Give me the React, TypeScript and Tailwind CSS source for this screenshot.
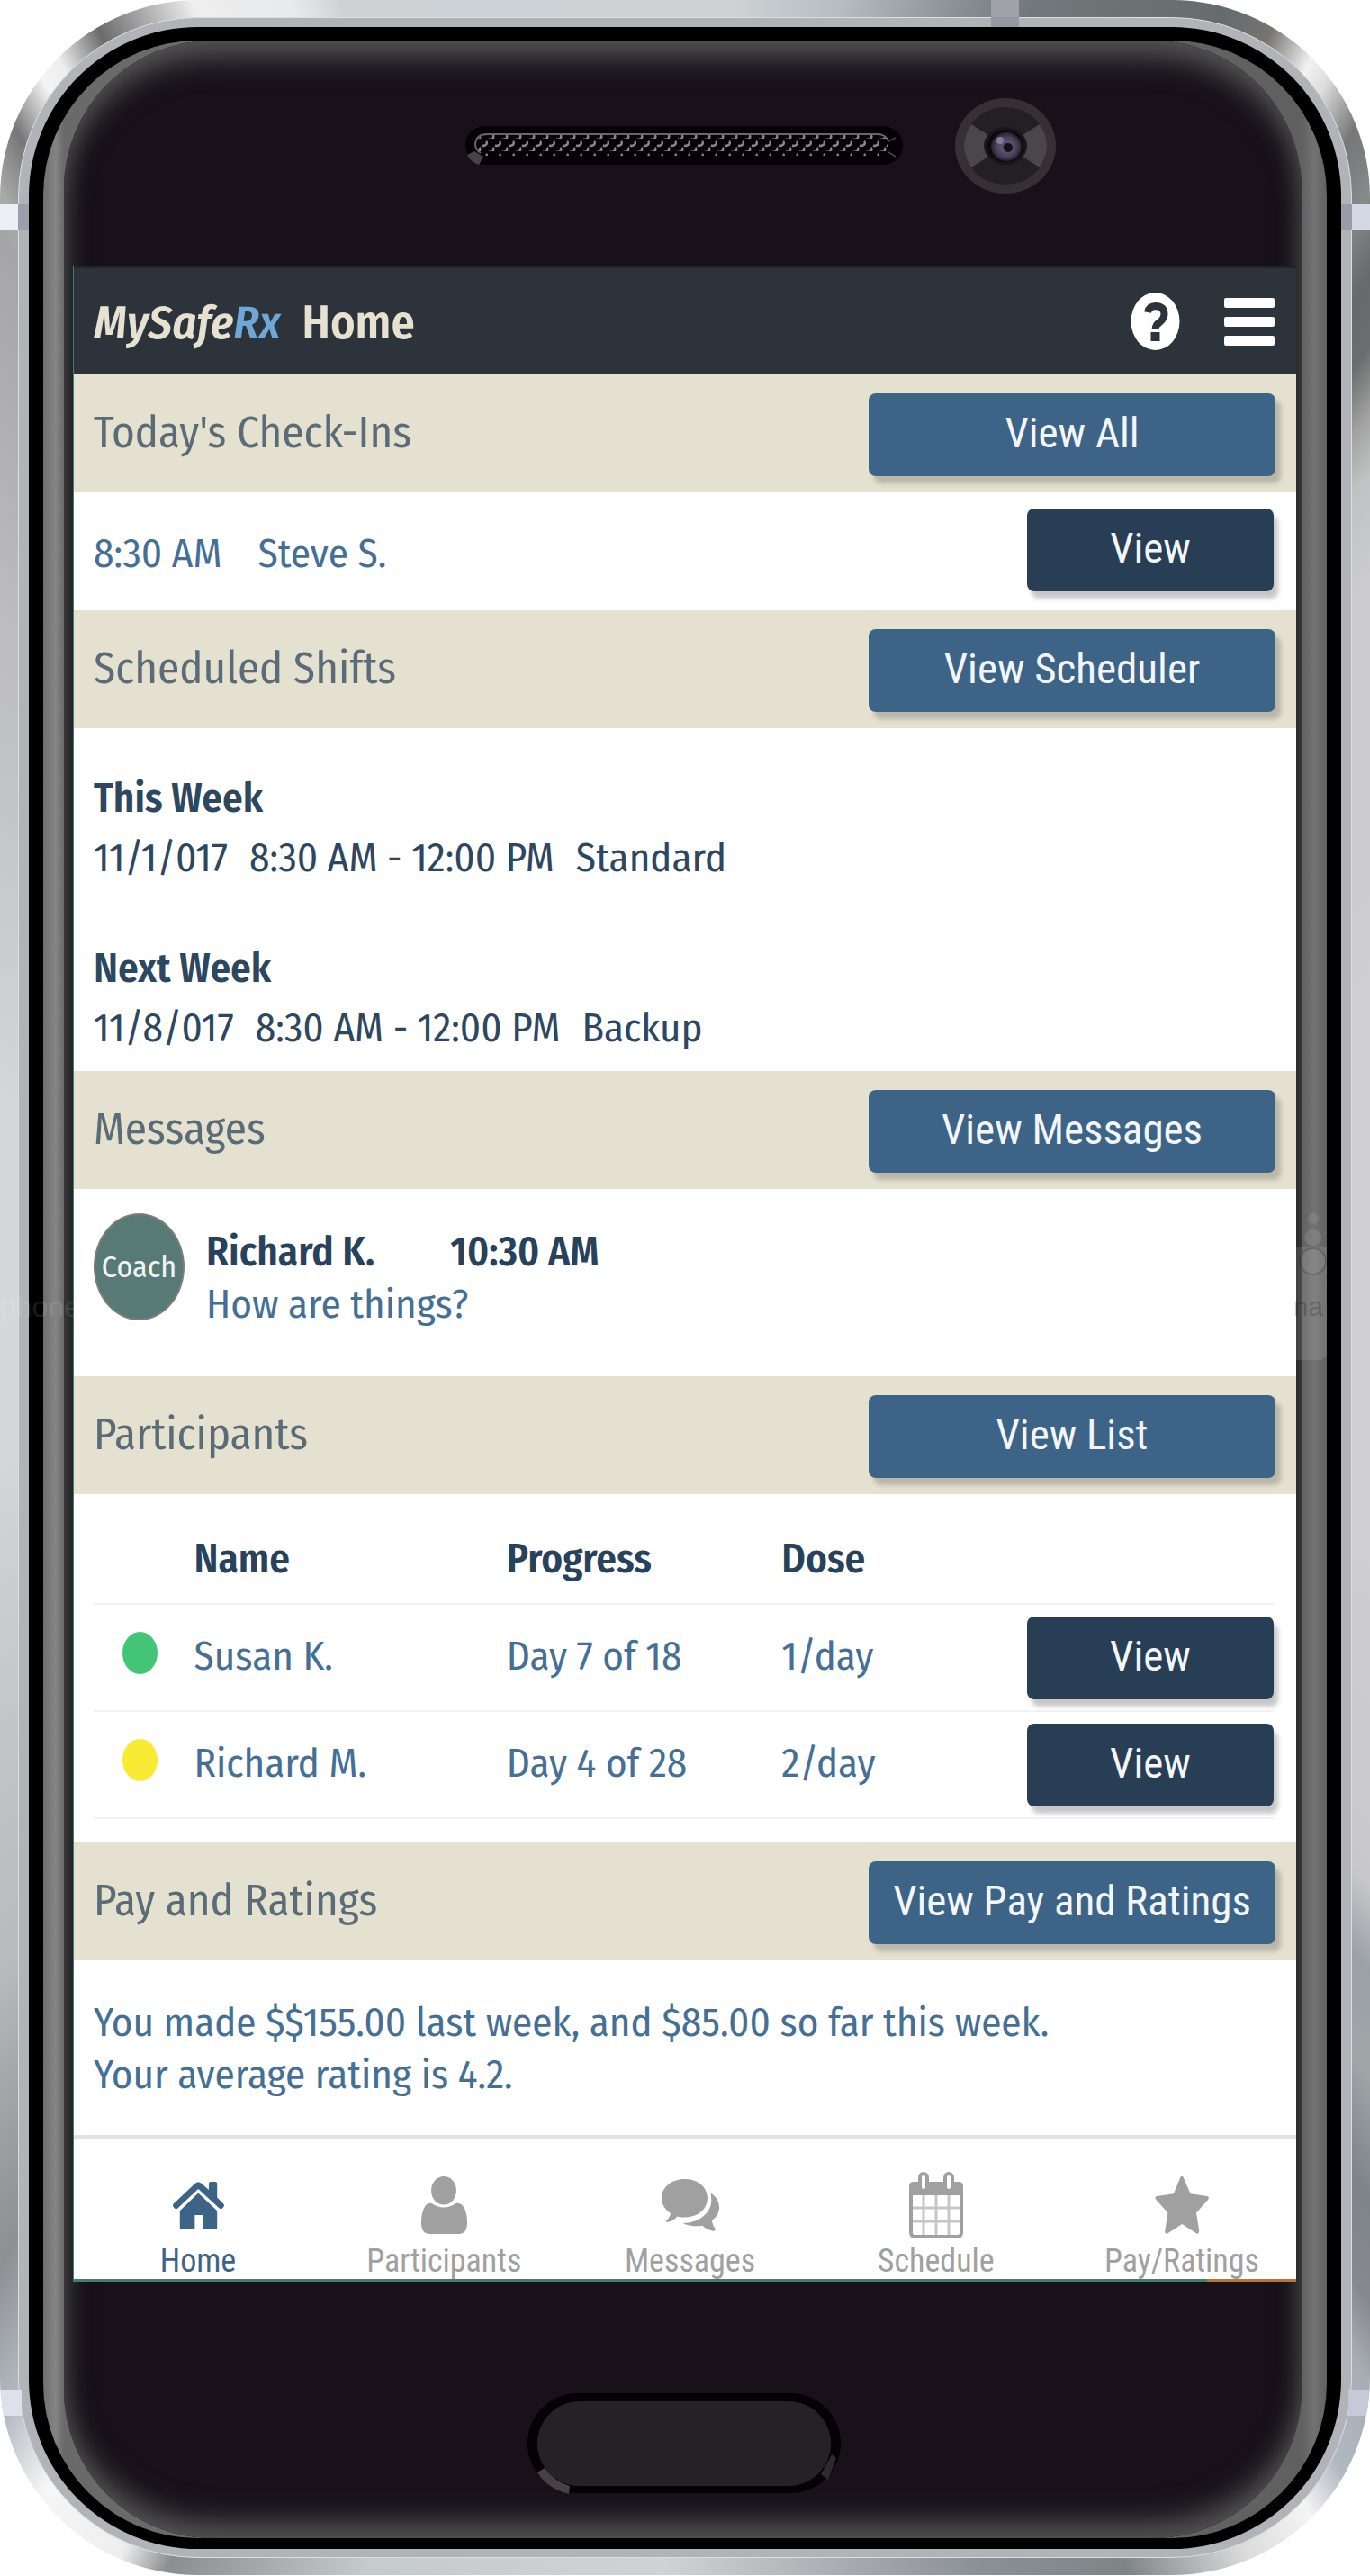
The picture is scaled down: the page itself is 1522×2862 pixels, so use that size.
import type { ReactNode } from 'react';

const sections = {
  shifts: [
    { title: 'This Week', date: '11/1/017', time: '8:30 AM - 12:00 PM', kind: 'Standard' },
    { title: 'Next Week', date: '11/8/017', time: '8:30 AM - 12:00 PM', kind: 'Backup' },
  ],
  participants: [
    { name: 'Susan K.', progress: 'Day 7 of 18', dose: '1/day', dot: 'bg-[#42c577]', status: 'On track' },
    { name: 'Richard M.', progress: 'Day 4 of 28', dose: '2/day', dot: 'bg-[#f9ea33]', status: 'Needs attention' },
  ],
};

function SectionBar({ title, action }: { title: string; action: string }) {
  return (
    <div className="flex h-[131px] items-center justify-between bg-[#e4e1d0] pt-[3px] pr-[23px] pl-[22px]">
      <h2 className="pb-1 text-[49px] leading-[60px] text-[#5c6c77]">{title}</h2>
      <button
        type="button"
        className="h-[92px] w-[452px] rounded-lg bg-[#3d6487] pb-1 font-['Roboto_Condensed','Roboto',sans-serif] text-[47px] leading-[60px] text-[#f3f6f9] shadow-[6px_8px_5px_rgba(90,85,75,0.3)]"
      >
        {action}
      </button>
    </div>
  );
}

function ViewButton({ label }: { label: string }) {
  return (
    <button
      type="button"
      aria-label={label}
      className="block h-[92px] w-[274px] rounded-lg bg-[#283e54] pb-1 font-['Roboto_Condensed','Roboto',sans-serif] text-[47px] leading-[60px] text-[#f3f6f9] shadow-[5px_8px_5px_rgba(70,70,80,0.3)]"
    >
      View
    </button>
  );
}

function HomeIcon() {
  return (
    <svg className="h-[53px] w-[57px]" viewBox="275 1035 117 158" preserveAspectRatio="none" fill="currentColor">
      <path d="M326 1040 Q333 1031 340 1040 L357 1062 V1040 Q357 1035 361 1035 H372 Q376 1035 376 1040 V1087 L390 1107 Q394 1113 390 1120 Q386 1129 381 1123 L333 1059 L286 1123 Q281 1129 277 1120 Q273 1113 277 1107 Z" />
      <path d="M333 1072 L376 1131 V1186 Q376 1193 370 1193 H343 V1145 H325 V1193 H297 Q291 1193 291 1186 V1131 Z" />
    </svg>
  );
}

function PersonIcon() {
  return (
    <svg className="h-[64px] w-[51px]" viewBox="837 1018 106 191" preserveAspectRatio="none" fill="currentColor">
      <ellipse cx="889" cy="1065" rx="29" ry="47" />
      <path d="M860 1107 Q889 1135 918 1107 Q930 1104 937 1125 Q943 1145 943 1172 Q943 1209 924 1209 H856 Q837 1209 837 1172 Q837 1145 843 1125 Q849 1104 860 1107 Z" />
    </svg>
  );
}

function ChatIcon() {
  return (
    <svg className="h-[58px] w-[64px]" viewBox="1384 1034 132 175" preserveAspectRatio="none" fill="currentColor">
      <path d="M1437 1034 C1468 1034 1489 1062 1489 1098 C1489 1134 1468 1162 1437 1162 C1431 1162 1425 1161 1420 1159 Q1410 1176 1396 1179 Q1393 1177 1396 1172 Q1405 1160 1404 1148 C1392 1136 1384 1118 1384 1098 C1384 1062 1406 1034 1437 1034 Z" />
      <path d="M1497 1081 C1510 1094 1516 1110 1516 1130 C1516 1148 1510 1162 1499 1173 Q1500 1187 1507 1200 Q1508 1209 1502 1208 Q1487 1204 1478 1190 C1460 1194 1445 1191 1433 1182 C1472 1180 1498 1145 1498 1107 Z" />
    </svg>
  );
}

function CalendarIcon() {
  return (
    <svg className="h-[74px] w-[60px]" viewBox="0 0 60 74" preserveAspectRatio="none">
      <rect x="2" y="13" width="56" height="59" rx="4" fill="#ffffff" stroke="currentColor" strokeWidth="4" />
      <path d="M0 16 Q0 11 5 11 H55 Q60 11 60 16 V26 H0 Z" fill="currentColor" />
      <g stroke="currentColor" strokeOpacity="0.6" strokeWidth="3">
        <path d="M16 26 V70 M30 26 V70 M44 26 V70 M4 40 H56 M4 55 H56" />
      </g>
      <rect x="12" y="2" width="8" height="19" rx="4" fill="#ffffff" stroke="currentColor" strokeWidth="4" />
      <rect x="40" y="2" width="8" height="19" rx="4" fill="#ffffff" stroke="currentColor" strokeWidth="4" />
    </svg>
  );
}

function StarIcon() {
  return (
    <svg className="h-[66px] w-[60px]" viewBox="1050 1006 129 200" preserveAspectRatio="none" fill="currentColor">
      <path d="M1111 1012 Q1115 1004 1118 1012 L1135 1067 L1175 1076 Q1181 1079 1177 1088 L1149 1132 L1156 1194 Q1155 1206 1149 1201 L1115 1170 L1081 1201 Q1074 1206 1074 1194 L1081 1132 L1053 1088 Q1048 1079 1055 1076 L1095 1067 Z" />
    </svg>
  );
}

function NavItem({ label, active, children }: { label: string; active?: boolean; children: ReactNode }) {
  return (
    <a
      href="#"
      aria-current={active ? 'page' : undefined}
      className={
        active
          ? 'flex w-44 flex-col items-center gap-1 text-[36px] leading-[40px] text-[#3d6487]'
          : 'flex w-44 flex-col items-center gap-1 text-[36px] leading-[40px] text-[#a0a0a0]'
      }
    >
      <span className="flex h-[76px] items-center">{children}</span>
      {label}
    </a>
  );
}

function Speaker() {
  return (
    <svg className="h-[44px] w-[486px]" viewBox="0 0 486 44" aria-hidden="true">
      <defs>
        <pattern id="mesh" width="15" height="14" patternUnits="userSpaceOnUse">
          <path d="M3 7.5 A4 3 0 0 0 8 3" fill="none" stroke="#8a848d" strokeWidth="2.500" />
          <path d="M-4.500 14.500 A4 3 0 0 0 0.500 10 M10.500 14.500 A4 3 0 0 0 15.500 10" fill="none" stroke="#8a848d" strokeWidth="2.500" />
        </pattern>
      </defs>
      <rect width="486" height="43" rx="22" fill="#050106" />
      <path d="M2 32 L10 28 L20 34 L15 43 Q6 40 2 32 Z" fill="#47424a" />
      <rect x="12" y="10" width="458" height="23" rx="11" fill="url(#mesh)" />
      <path d="M17 30 Q11 26 11 20 Q12 9 24 9 H458 Q466 9 470 16" fill="none" stroke="#6a646d" strokeWidth="2" />
      <path d="M470 17 L478 13 M470 29 L478 34" stroke="#47424a" strokeWidth="1.500" />
    </svg>
  );
}

function Camera() {
  return (
    <svg className="h-[106px] w-[112px]" viewBox="0 0 112 106" preserveAspectRatio="none" aria-hidden="true">
      <defs>
        <radialGradient id="lens">
          <stop offset="0" stopColor="#1b1624" />
          <stop offset="0.300" stopColor="#5d5570" />
          <stop offset="0.700" stopColor="#47415a" />
          <stop offset="1" stopColor="#241f2b" />
        </radialGradient>
      </defs>
      <ellipse cx="56" cy="53" rx="56" ry="53" fill="#363036" />
      <ellipse cx="56" cy="53" rx="46" ry="43" fill="#241f24" />
      <path d="M56 53 L18 29 Q2 53 18 77 Z" fill="#4b464a" />
      <path d="M56 53 L94 29 Q110 53 94 77 Z" fill="#4b464a" />
      <ellipse cx="56" cy="53" rx="24" ry="21" fill="#1a151b" />
      <ellipse cx="56" cy="53" rx="20" ry="18" fill="#0c090e" />
      <ellipse cx="57" cy="54" rx="17" ry="16" fill="url(#lens)" />
      <circle cx="50" cy="47" r="4" fill="#837c98" />
      <circle cx="59" cy="55" r="5" fill="#120f1a" />
    </svg>
  );
}

function HomeKey() {
  return (
    <button type="button" aria-label="Home key" className="block">
      <svg className="h-[113px] w-[348px]" viewBox="0 0 348 113" aria-hidden="true">
        <rect width="348" height="111" rx="56" fill="#050106" />
        <rect x="11" y="9" width="326" height="94" rx="47" fill="#262126" />
        <path d="M11 88 L19 83 Q30 98 47 103 L46 112 Q22 106 11 88 Z" fill="#474147" />
        <path d="M326 90 L338 68 L343 72 L334 96 Z" fill="#2f2a30" />
      </svg>
    </button>
  );
}

export default function App() {
  return (
    <div className="w-full bg-white font-['Fira_Sans_Condensed','Roboto_Condensed','Roboto',sans-serif]">
      <div className="relative overflow-hidden rounded-[220px] bg-[conic-gradient(#cfd3d6_2deg,#b5bcc0_7deg,#8a9093_12deg,#72787b_15deg,#666b6d_23deg,#777470_25deg,#f2f2f2_27deg,#dddddd_28deg,#777777_30deg,#858a8a_32deg,#686a6b_34deg,#6b6c6d_36deg,#a0a0a0_38deg,#c0c2c2_40deg,#cbcbd0_44deg,#cfcfd2_70deg,#cfcfd2_110deg,#c8c8cc_131deg,#9aa0a4_135deg,#a0a5a8_139deg,#7f848a_143deg,#85898d_146deg,#a8adb4_148deg,#b0b8c2_151deg,#f4f4f4_153deg,#dddddd_156deg,#7f8487_161deg,#8b9096_167deg,#d0d3d5_181deg,#c5cacd_194deg,#8a8e90_202deg,#eeeeee_204deg,#f6f6f6_208deg,#b5bac2_211deg,#8c9093_215deg,#b8bbbe_225deg,#d4d7da_256deg,#d4d7da_285deg,#bcbcc0_315deg,#a6a6a8_327deg,#aaaaaa_328deg,#777777_330deg,#f4f4f4_332deg,#eeeeee_333deg,#6b6b6b_335deg,#eeeeee_339deg,#e8e9eb_343deg,#cfd2d4_345deg,#cdd2d6_350deg,#cfd3d6_360deg)] px-5 py-[19px]">
        <div className="rounded-[200px] border border-[#dcdee4] bg-[#b1b3b9] px-[11px] pt-2.5 pb-[9px]">
          <div className="rounded-[188px] bg-black px-4 pt-[15px] pb-3">
            <div className="overflow-hidden rounded-[172px] bg-[linear-gradient(90deg,#707070,#848484_14px,#6a6a6a_23px,#6a6a6a_50%,#606060_calc(100%-28px),#727272_calc(100%-14px),#626262)] pr-[28px] pl-[23px]">
              <div className="rounded-[165px] bg-[#18111a] pr-1.5 pl-2.5 shadow-[inset_0_26px_34px_-10px_#5a5a5a,inset_0_-26px_34px_-10px_#5a5a5a,inset_0_0_28px_6px_#1d1d1d]">
                <div className="grid h-[250px] grid-cols-[1fr_auto_1fr] items-center pr-0.5 pb-4">
                  <span />
                  <Speaker />
                  <div className="pl-[58px]">
                    <Camera />
                  </div>
                </div>

                <main className="border-b-[3px] border-l border-[#3f7d77] bg-white">
                  <header className="flex h-[121px] items-center justify-between border-t-[3px] border-[#1d2529] bg-[#2c333a] pr-6 pl-[22px]">
                    <h1 className="flex gap-6 pt-1 text-[#e6e1d0]">
                      <span className="text-[52px] leading-[64px] font-semibold italic">
                        MySafe<span className="text-[#6fa8d8]">Rx</span>
                      </span>
                      <span className="text-[52px] leading-[64px] font-semibold">Home</span>
                    </h1>
                    <div className="flex items-center gap-[49px] text-white">
                      <button type="button" aria-label="Help">
                        <svg className="h-[64px] w-[55px]" viewBox="0 0 54 64" aria-hidden="true">
                          <ellipse cx="27" cy="32" rx="27" ry="32" fill="currentColor" />
                          <path d="M18.500 22 Q20 15 27.500 15 Q37 15.500 37 24 Q37 29 32 33 Q27 36 27 41" fill="none" stroke="#2c333a" strokeWidth="8" />
                          <rect x="22" y="44" width="10" height="10" fill="#2c333a" />
                        </svg>
                      </button>
                      <button type="button" aria-label="Menu" className="flex w-14 flex-col gap-2.5">
                        <span className="h-[11px] rounded-[2px] bg-white" />
                        <span className="h-[11px] rounded-[2px] bg-white" />
                        <span className="h-[11px] rounded-[2px] bg-white" />
                      </button>
                    </div>
                  </header>

                  <section>
                    <SectionBar title="Today's Check-Ins" action="View All" />
                    <div className="flex h-[131px] items-center justify-between pr-[25px] pb-[3px] pl-[22px] text-[45px] leading-[58px] text-[#456f94]">
                      <p className="flex gap-10 pt-2">
                        <span>8:30 AM</span>
                        <span>Steve S.</span>
                      </p>
                      <ViewButton label="View check-in with Steve S." />
                    </div>
                  </section>

                  <section>
                    <SectionBar title="Scheduled Shifts" action="View Scheduler" />
                    <div className="flex flex-col gap-[57px] pt-[45px] pb-[15px] pl-[22px] text-[45px] leading-[66px] text-[#2d475e]">
                      {sections.shifts.map((s) => (
                        <div key={s.title}>
                          <h3 className="font-semibold">{s.title}</h3>
                          <p className="flex gap-6">
                            <span>{s.date}</span>
                            <span>{s.time}</span>
                            <span>{s.kind}</span>
                          </p>
                        </div>
                      ))}
                    </div>
                  </section>

                  <section>
                    <SectionBar title="Messages" action="View Messages" />
                    <div className="flex h-[208px] gap-6 pt-[27px] pl-[22px]">
                      <div className="flex h-[119px] w-[101px] items-center justify-center rounded-[50%] border-2 border-[#7d7d7a] bg-[#577a77] text-[34px] leading-[40px] text-[#f0f4f3]">
                        Coach
                      </div>
                      <div className="pt-3.5 text-[45px] leading-[58px]">
                        <p className="flex gap-[84px] font-semibold text-[#27425a]">
                          <span>Richard K.</span>
                          <span>10:30 AM</span>
                        </p>
                        <p className="text-[#456f94]">How are things?</p>
                      </div>
                    </div>
                  </section>

                  <section>
                    <SectionBar title="Participants" action="View List" />
                    <div className="pr-[25px] pb-[26px] pl-[22px]">
                      <table className="w-full table-fixed border-collapse text-left text-[45px] leading-[58px]">
                        <colgroup>
                          <col className="w-[8.500%]" />
                          <col className="w-[26.500%]" />
                          <col className="w-[23.300%]" />
                          <col className="w-[20.800%]" />
                          <col />
                        </colgroup>
                        <thead className="text-[#27425a]">
                          <tr className="h-[122px] border-b-2 border-[#f2f2f2]">
                            <td />
                            <th scope="col" className="pt-[22px] font-semibold">Name</th>
                            <th scope="col" className="pt-[22px] font-semibold">Progress</th>
                            <th scope="col" className="pt-[22px] font-semibold">Dose</th>
                            <td />
                          </tr>
                        </thead>
                        <tbody className="text-[#456f94]">
                          {sections.participants.map((p) => (
                            <tr key={p.name} className="h-[119px] border-b-2 border-[#f2f2f2]">
                              <td className="pb-2.5 pl-8">
                                <span role="img" aria-label={p.status} className={`block h-[47px] w-[39px] rounded-[50%] ${p.dot}`} />
                              </td>
                              <td className="pb-1">{p.name}</td>
                              <td className="pb-1">{p.progress}</td>
                              <td className="pb-1">{p.dose}</td>
                              <td>
                                <ViewButton label={`View ${p.name}`} />
                              </td>
                            </tr>
                          ))}
                        </tbody>
                      </table>
                    </div>
                  </section>

                  <section>
                    <SectionBar title="Pay and Ratings" action="View Pay and Ratings" />
                    <div className="px-[22px] pt-10 pb-[38px] text-[45px] leading-[58px] text-[#456f94]">
                      <p>You made $$155.00 last week, and $85.00 so far this week.</p>
                      <p>Your average rating is 4.2.</p>
                    </div>
                  </section>

                  <nav aria-label="Main" className="flex justify-between border-t-[5px] border-[#e3e3e3] pt-[35px] pr-[39px] pl-[50px] font-['Roboto_Condensed','Roboto',sans-serif]">
                    <NavItem label="Home" active><HomeIcon /></NavItem>
                    <NavItem label="Participants"><PersonIcon /></NavItem>
                    <NavItem label="Messages"><ChatIcon /></NavItem>
                    <NavItem label="Schedule"><CalendarIcon /></NavItem>
                    <NavItem label="Pay/Ratings"><StarIcon /></NavItem>
                  </nav>
                  <div className="relative">
                    <span className="absolute top-0 right-0 h-[3px] w-[99px] bg-[#b87535]" />
                  </div>
                </main>

                <div className="flex h-[285px] items-start justify-center pt-[124px] pr-0.5">
                  <HomeKey />
                </div>
              </div>
            </div>
          </div>
        </div>

        <span className="absolute top-[227px] left-0 h-[29px] w-5 bg-[#eceff6]" />
        <span className="absolute top-[227px] left-5 h-[29px] w-3 bg-[#9a9fab]" />
        <span className="absolute top-[227px] right-0 h-[29px] w-5 bg-[#d3d8e4]" />
        <span className="absolute top-[227px] right-5 h-[29px] w-3 bg-[#9a9ba6]" />
        <span className="absolute bottom-[177px] left-0 h-[29px] w-6 bg-[#dfe1ea]" />
        <span className="absolute right-0 bottom-[177px] h-[29px] w-6 bg-[#c6cad8]" />
        <span className="absolute top-0 right-[390px] h-[19px] w-[31px] bg-[#a0a2a8]" />
        <span className="absolute top-[19px] right-[390px] h-[11px] w-[31px] bg-[#9599a2]" />
        <span className="absolute top-[1386px] right-[48px] h-[125px] w-[34px] rounded-br-lg bg-white/10" />
        <span className="absolute top-[1386px] right-[48px] h-[31px] w-[31px] rounded-full border-2 border-black/20 bg-white/5" />
        <span className="absolute top-[1366px] right-[54px] h-[18px] w-[19px] rounded-full bg-white/10" />
        <span className="absolute top-[1348px] right-[57px] h-3 w-3 rounded-full bg-white/10" />
        <span aria-hidden="true" className="absolute top-[1430px] left-0 font-['Liberation_Sans'] text-[32px] leading-[44px] text-white/10">phone</span>
        <span aria-hidden="true" className="absolute top-[1430px] right-[52px] font-['Liberation_Sans'] text-[30px] leading-[44px] text-black/20">na</span>
      </div>
    </div>
  );
}
